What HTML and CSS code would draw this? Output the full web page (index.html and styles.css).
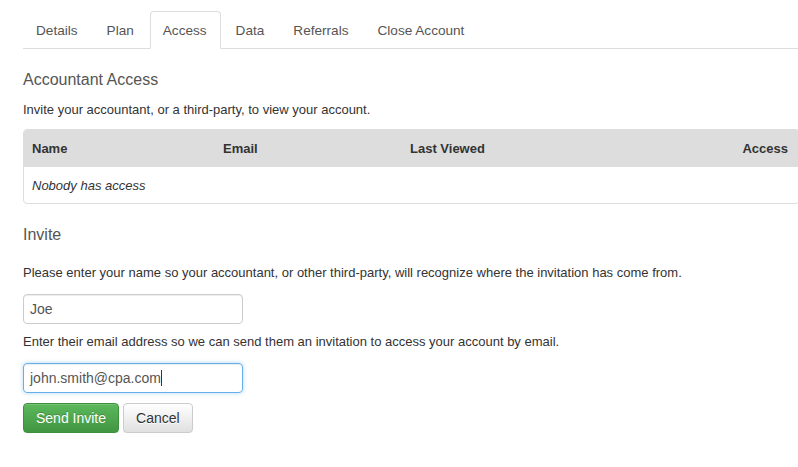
FILE: index.html
```html
<!DOCTYPE html>
<html>
<head>
<meta charset="utf-8">
<link rel="stylesheet" href="styles.css">
</head>
<body>
<div class="page">
  <ul class="tabs">
    <li class="tab">Details</li>
    <li class="tab">Plan</li>
    <li class="tab active">Access</li>
    <li class="tab">Data</li>
    <li class="tab">Referrals</li>
    <li class="tab">Close Account</li>
  </ul>

  <h3 class="heading">Accountant Access</h3>
  <p class="text">Invite your accountant, or a third-party, to view your account.</p>

  <div class="panel">
    <table class="grid">
      <thead>
        <tr>
          <th class="c-name">Name</th>
          <th class="c-email">Email</th>
          <th class="c-viewed">Last Viewed</th>
          <th class="c-access">Access</th>
        </tr>
      </thead>
      <tbody>
        <tr>
          <td colspan="4" class="empty">Nobody has access</td>
        </tr>
      </tbody>
    </table>
  </div>

  <h3 class="heading invite">Invite</h3>
  <p class="text p-name">Please enter your name so your accountant, or other third-party, will recognize where the invitation has come from.</p>
  <div class="field">Joe</div>
  <p class="text p-email">Enter their email address so we can send them an invitation to access your account by email.</p>
  <div class="field focus">john.smith@cpa.com<span class="caret"></span></div>
  <div class="actions">
    <button class="btn btn-success">Send Invite</button>
    <button class="btn btn-default">Cancel</button>
  </div>
</div>
</body>
</html>
```

FILE: styles.css
```css
html, body {
  margin: 0;
  padding: 0;
  overflow: hidden;
  background: #fff;
}
body {
  font-family: "Liberation Sans", Arial, sans-serif;
  font-size: 13px;
  color: #333;
}
.page {
  margin-left: 23px;
  width: 777px;
  padding-top: 11px;
}
.tabs {
  list-style: none;
  margin: 0;
  padding: 0;
  display: flex;
  border-bottom: 1px solid #ddd;
}
.tab {
  padding: 10px 13px 9px 12px;
  line-height: 17px;
  margin-right: 2px;
  margin-bottom: -1px;
  border: 1px solid transparent;
  border-radius: 4px 4px 0 0;
  color: #555;
  font-size: 13.6px;
}
.tab.active {
  border-color: #ddd;
  border-bottom-color: #fff;
  background: #fff;
}
.heading {
  margin: 21px 0 0;
  font-size: 16px;
  font-weight: normal;
  color: #555;
  line-height: 20px;
}
.text {
  margin: 11px 0 0;
  line-height: 18px;
}
.panel {
  margin-top: 10px;
  border: 1px solid #ddd;
  border-radius: 4px;
  overflow: hidden;
}
.grid {
  width: 100%;
  border-collapse: collapse;
}
.grid th {
  background: #ddd;
  text-align: left;
  font-weight: bold;
  height: 37px;
  padding: 0 8px;
  box-sizing: border-box;
}
.c-name { width: 191px; }
.c-email { width: 187px; }
.grid th.c-access {
  text-align: right;
  padding-right: 11px;
}
.empty {
  font-style: italic;
  height: 36px;
  padding: 0 8px;
}
.invite {
  margin-top: 21px;
}
.p-name {
  margin-top: 19px;
}
.field {
  margin-top: 12px;
  width: 220px;
  height: 30px;
  box-sizing: border-box;
  border: 1px solid #ccc;
  border-radius: 4px;
  padding: 0 6px;
  line-height: 28px;
  font-size: 14px;
  color: #555;
  box-shadow: inset 0 1px 1px rgba(0,0,0,0.075);
}
.field.focus {
  border-color: #66afe9;
  box-shadow: inset 0 1px 1px rgba(0,0,0,0.075), 0 0 4px rgba(102,175,233,0.5);
}
.caret {
  display: inline-block;
  width: 1px;
  height: 16px;
  background: #333;
  vertical-align: middle;
  margin-top: -2px;
}
.p-email {
  margin-top: 9px;
}
.actions {
  margin-top: 10px;
  display: flex;
  gap: 4px;
}
.btn {
  font-family: "Liberation Sans", Arial, sans-serif;
  font-size: 14px;
  height: 30px;
  padding: 0 12px;
  border-radius: 4px;
  border: 1px solid;
  line-height: 28px;
  margin: 0;
}
.btn-success {
  color: #fff;
  background: linear-gradient(#5cb85c, #419641);
  border-color: #3e8f3e;
  text-shadow: 0 -1px 0 rgba(0,0,0,0.2);
  box-shadow: inset 0 1px 0 rgba(255,255,255,0.15), 0 1px 1px rgba(0,0,0,0.075);
}
.btn-default {
  color: #333;
  background: linear-gradient(#fff, #e0e0e0);
  border-color: #ccc;
  text-shadow: 0 1px 0 #fff;
  box-shadow: inset 0 1px 0 rgba(255,255,255,0.15), 0 1px 1px rgba(0,0,0,0.075);
}
```
